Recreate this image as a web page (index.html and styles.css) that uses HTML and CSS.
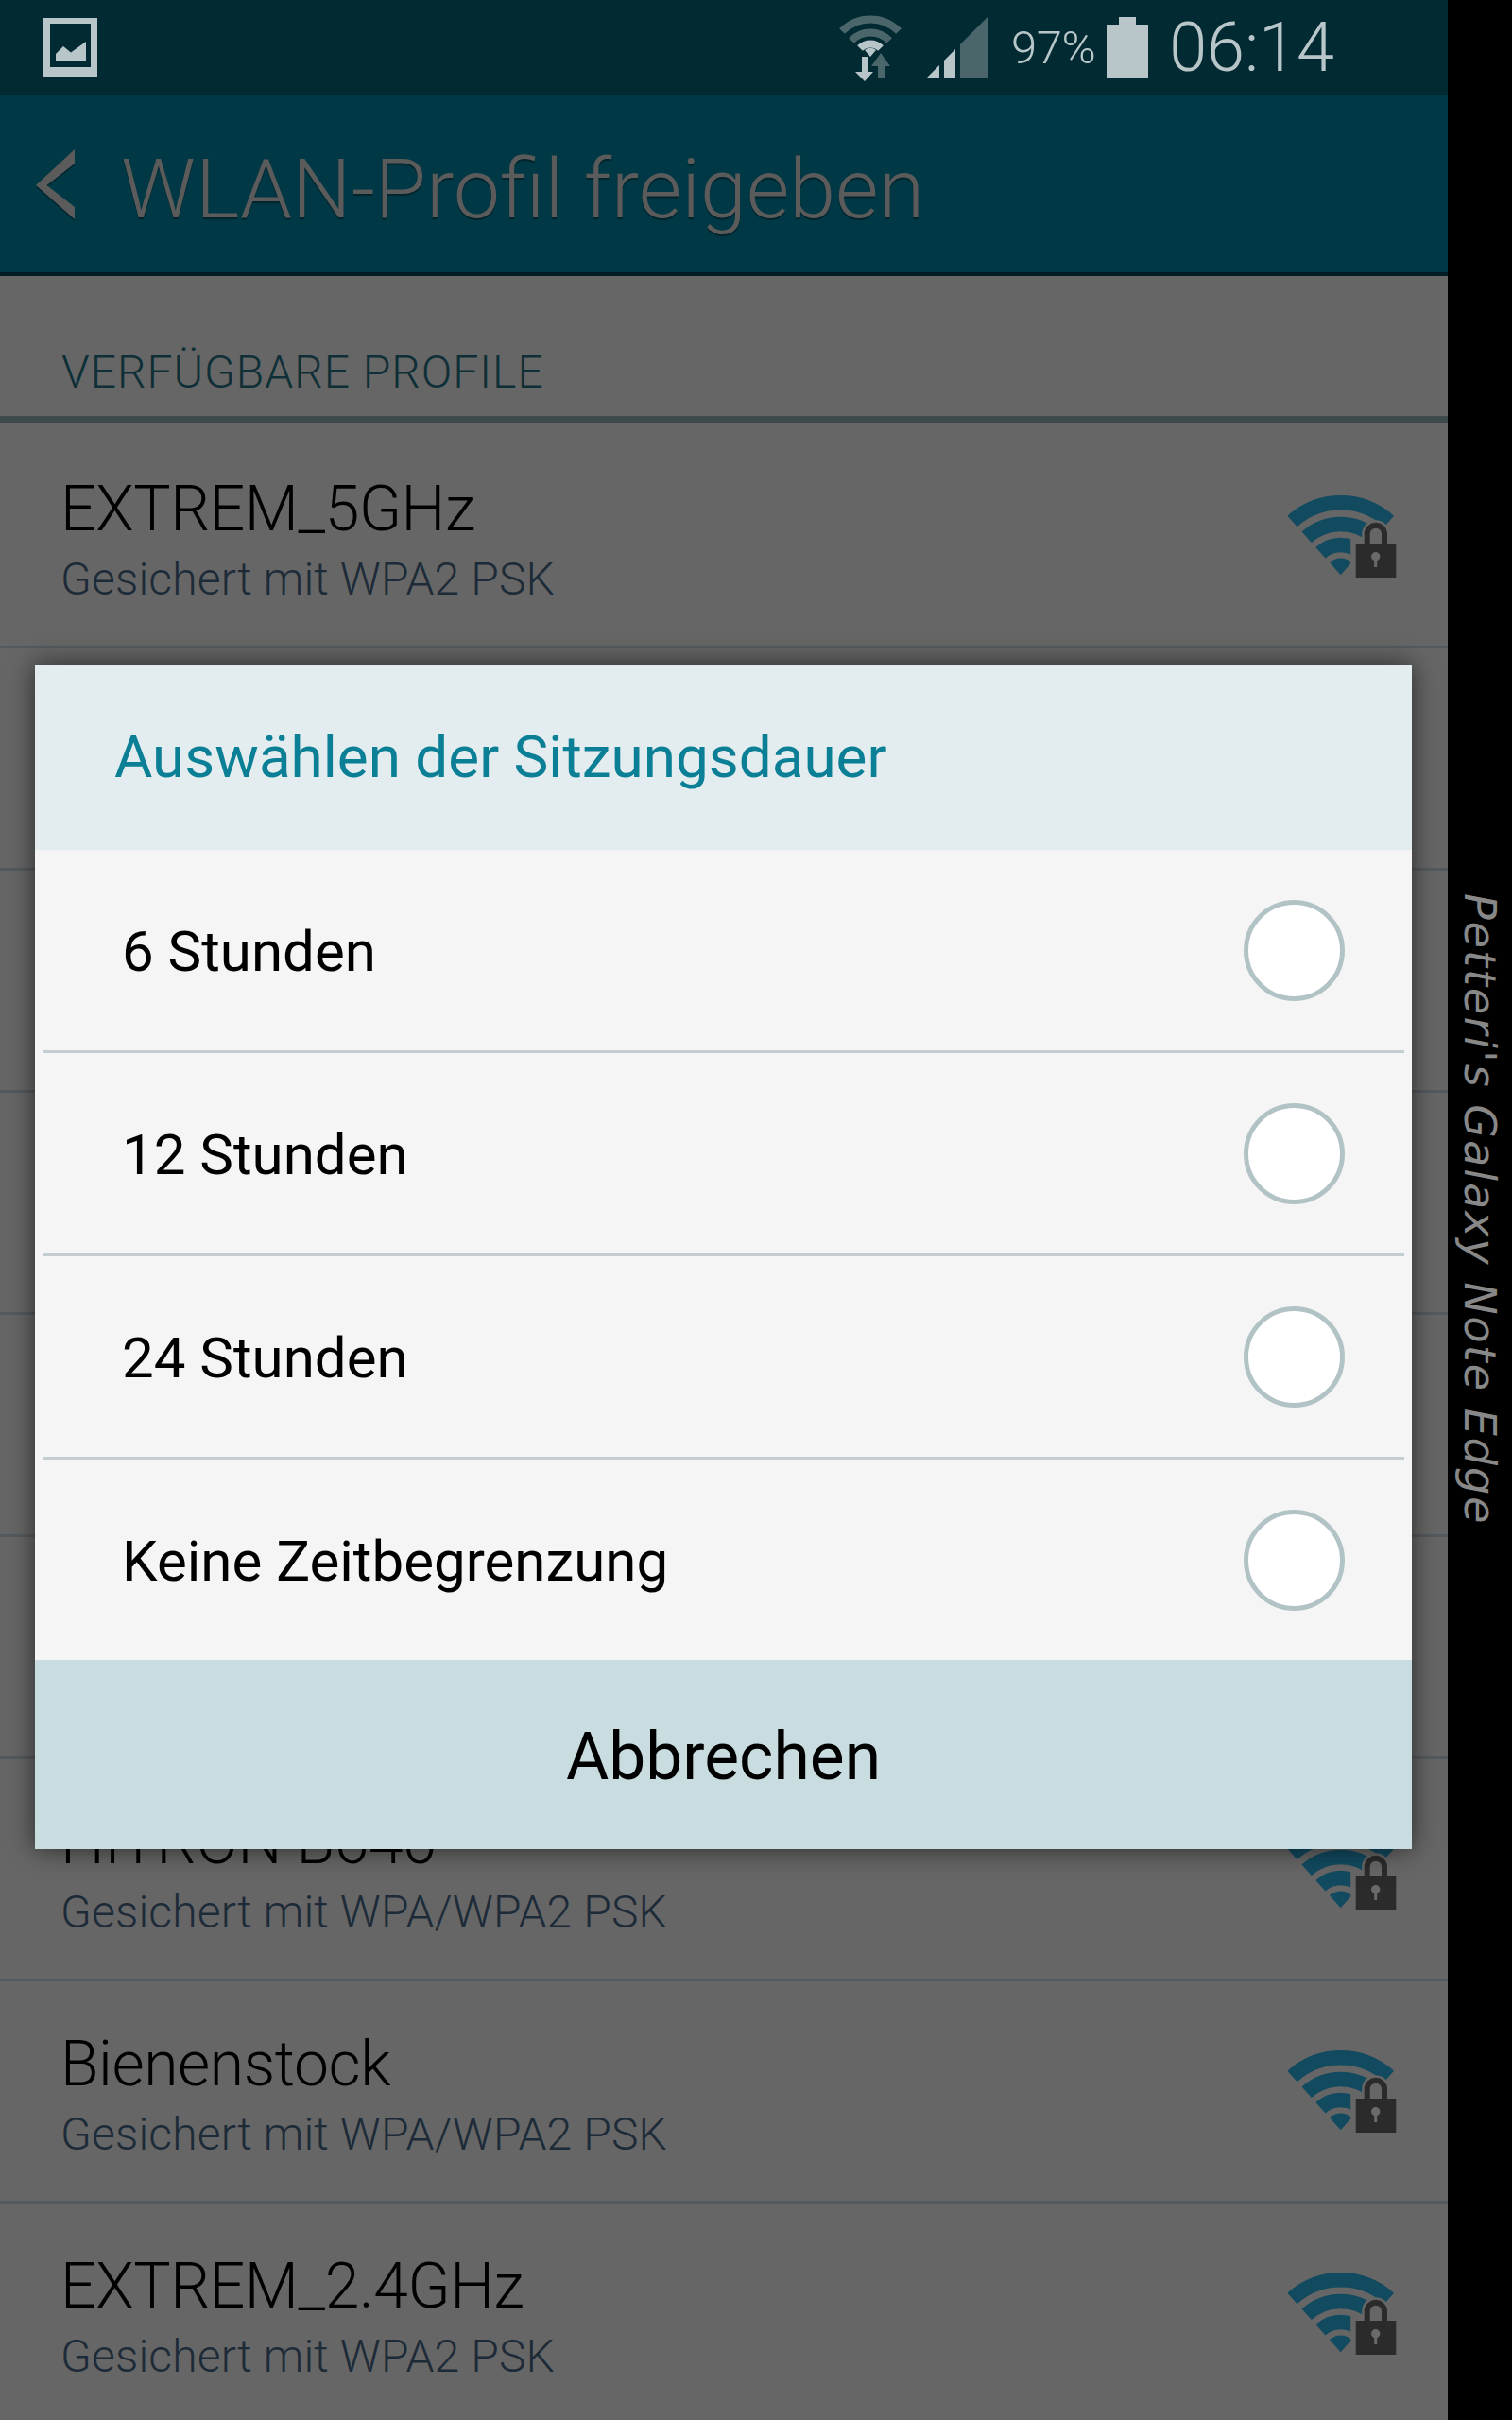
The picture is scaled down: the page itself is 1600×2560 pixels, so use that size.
FILE: index.html
```html
<!DOCTYPE html>
<html lang="de">
  <head>
    <meta charset="utf-8">
    <title>WLAN-Profil freigeben</title>
    <link rel="stylesheet" href="styles.css">
  </head>
  <body>
    <svg class="defs" width="0" height="0">
      <symbol id="wifi-lock" viewBox="0 0 116 90">
        <g class="fan">
          <path d="M4.5 27.4A76.6 76.6 0 0 1 106.9 27.4"/>
          <path d="M19.7 44.3A53.8 53.8 0 0 1 91.7 44.3"/>
          <path d="M34.4 60.7A31.8 31.8 0 0 1 77 60.7"/>
        </g>
        <path class="fan-tip" d="M55.7 84.3L43.9 71.1A17.7 17.7 0 0 1 67.5 71.1Z"/>
        <path class="halo" d="M71.7 51H114.3V87H71.7ZM83.7 51V40A9.2 9.2 0 0 1 102 40V51"/>
        <path class="shackle" d="M83.7 51V40A9.2 9.2 0 0 1 102 40V51"/>
        <rect class="body" x="71.7" y="51" width="42.6" height="36"/>
        <circle class="hole" cx="92.7" cy="64.7" r="4.7"/>
        <rect class="hole" x="91.2" y="66" width="3" height="10"/>
      </symbol>
    </svg>

    <div id="phone">
      <div id="screen">
        <!-- status bar -->
        <div class="status">
          <svg class="st-pic" width="57" height="62" viewBox="0 0 57 62">
            <path class="st-fill" fill-rule="evenodd" d="M0 0H57V62H0ZM7 6V52H50V6Z"/>
            <path class="st-fill" d="M13 45V38L21 30L29 36.500L45 25V45Z"/>
          </svg>
          <div class="status-right">
            <svg class="st-wifi" width="66" height="71" viewBox="0 0 66 71">
              <g class="arc-dim">
                <path d="M3 18A42 42 0 0 1 63 18"/>
                <path d="M13 28A28 28 0 0 1 53 28"/>
              </g>
              <g class="arc-on">
                <path d="M22 36A15.500 15.500 0 0 1 44 36"/>
              </g>
              <path class="st-fill" d="M33 45L27 38A9 9 0 0 1 39 38Z"/>
              <path class="st-fill" d="M24 45H30V61H36L27 71L17 61H24Z"/>
              <path class="st-dim" d="M44 41L54 55H48V67H41V55H34Z"/>
            </svg>
            <svg class="st-signal" width="64" height="64" viewBox="0 0 64 64">
              <path class="st-fill" d="M0 64L13 51V64Z"/>
              <path class="st-fill" d="M18 64V46L30 34V64Z"/>
              <path class="st-dim" d="M35 64V29L64 0V64Z"/>
            </svg>
            <span class="st-pct">97%</span>
            <svg class="st-batt" width="44" height="64" viewBox="0 0 44 64">
              <path class="st-fill" d="M13 0H31V8H44V64H0V8H13Z"/>
            </svg>
            <span class="st-time">06:14</span>
          </div>
        </div>

        <!-- action bar -->
        <div class="actionbar">
          <svg class="back" width="41" height="76" viewBox="0 0 41 76">
            <path d="M41 0V15L11.500 38L41 61V74L0 38Z"/>
          </svg>
          <span class="actionbar-title">WLAN-Profil freigeben</span>
        </div>

        <div class="section">VERFÜGBARE PROFILE</div>

        <div class="list">
          <div class="row">
            <div class="row-text">
              <div class="name">EXTREM_5GHz</div>
              <div class="sub">Gesichert mit WPA2 PSK</div>
            </div>
            <svg class="wifi"><use href="#wifi-lock"/></svg>
          </div>
          <div class="row"></div>
          <div class="row"></div>
          <div class="row"></div>
          <div class="row"></div>
          <div class="row"></div>
          <div class="row">
            <div class="row-text">
              <div class="name">HITRON B640</div>
              <div class="sub">Gesichert mit WPA/WPA2 PSK</div>
            </div>
            <svg class="wifi"><use href="#wifi-lock"/></svg>
          </div>
          <div class="row">
            <div class="row-text">
              <div class="name">Bienenstock</div>
              <div class="sub">Gesichert mit WPA/WPA2 PSK</div>
            </div>
            <svg class="wifi"><use href="#wifi-lock"/></svg>
          </div>
          <div class="row row-last">
            <div class="row-text">
              <div class="name">EXTREM_2.4GHz</div>
              <div class="sub">Gesichert mit WPA2 PSK</div>
            </div>
            <svg class="wifi"><use href="#wifi-lock"/></svg>
          </div>
        </div>

        <!-- session dialog -->
        <div class="dialog">
          <div class="dialog-title">Auswählen der Sitzungsdauer</div>
          <div class="option"><span>6 Stunden</span><span class="radio"></span></div>
          <div class="option"><span>12 Stunden</span><span class="radio"></span></div>
          <div class="option"><span>24 Stunden</span><span class="radio"></span></div>
          <div class="option option-last"><span>Keine Zeitbegrenzung</span><span class="radio"></span></div>
          <div class="dialog-cancel">Abbrechen</div>
        </div>
      </div>

      <div id="edge">
        <span class="edge-text">Petteri's Galaxy Note Edge</span>
      </div>
    </div>
  </body>
</html>
```

FILE: styles.css
```css
html, body{
  margin:0;
  padding:0;
  background:#000;
}
body{
  font-family:"Roboto", "Liberation Sans", sans-serif;
}
.defs{
  position:absolute;
}
#phone{
  display:flex;
  width:1600px;
  height:2560px;
  overflow:hidden;
}
#screen{
  position:relative;
  width:1532px;
  height:2560px;
  background:#666;
  overflow:hidden;
}
#edge{
  width:68px;
  background:#000;
  padding-top:945px;
  box-sizing:border-box;
}
.edge-text{
  display:block;
  writing-mode:vertical-rl;
  font-family:"DejaVu Sans", sans-serif;
  font-style:oblique;
  font-size:46px;
  letter-spacing:2px;
  line-height:68px;
  color:#888;
  white-space:nowrap;
}

/* status bar */
.status{
  display:flex;
  justify-content:space-between;
  align-items:center;
  height:100px;
  padding:0 120px 0 46px;
  box-sizing:border-box;
  background:#012a32;
}
.status-right{
  display:flex;
  align-items:center;
}
.st-fill{fill:#b9c6c9;}
.st-dim{fill:#4b666b;}
.arc-dim path, .arc-on path{
  fill:none;
  stroke-width:8;
}
.arc-dim path{stroke:#4b666b;}
.arc-on path{stroke:#b9c6c9;}
.st-signal{margin-left:27px;}
.st-pct{
  margin-left:25px;
  font-size:49px;
  font-weight:300;
  color:#b9c6c9;
  letter-spacing:-0.5px;
}
.st-batt{margin-left:12px;}
.st-time{
  margin-left:22px;
  font-size:72px;
  font-weight:300;
  color:#b9c6c9;
}

/* action bar */
.actionbar{
  display:flex;
  align-items:center;
  height:188px;
  padding-left:38px;
  background:#003945;
  border-bottom:4px solid #021c26;
}
.back{
  margin-top:4px;
  fill:#5b5b5b;
  filter:drop-shadow(0 2px 0 #01242d);
}
.actionbar-title{
  margin:10px 0 0 49px;
  font-size:88px;
  font-weight:300;
  color:#5b5b5b;
  text-shadow:0 2px 1px #01242d;
}

/* list */
.section{
  height:73px;
  padding:75px 0 0 65px;
  font-size:48px;
  font-weight:300;
  letter-spacing:1px;
  line-height:54px;
  color:#0f2f37;
  border-bottom:8px solid #3f4a4c;
}
.list{
  padding-top:3px;
}
.row{
  display:flex;
  justify-content:space-between;
  align-items:center;
  height:235px;
  padding:0 53px 0 64px;
  box-sizing:border-box;
  border-bottom:3px solid #555a5e;
}
.row-last{
  border-bottom-color:transparent;
}
.row-text{
  padding-top:8px;
}
.name{
  font-size:66px;
  letter-spacing:-0.4px;
  line-height:78px;
  font-weight:300;
  color:#000;
}
.sub{
  margin-top:6px;
  font-size:48px;
  letter-spacing:0.15px;
  line-height:58px;
  font-weight:300;
  color:#1d2b38;
}
.wifi{
  width:116px;
  height:90px;
  margin-top:3px;
}
.fan path{
  fill:none;
  stroke:#124a60;
  stroke-width:15.400;
}
.fan-tip{fill:#124a60;}
.halo{
  fill:#666;
  stroke:#666;
  stroke-width:11;
}
.shackle{
  fill:none;
  stroke:#2b2b2b;
  stroke-width:6;
}
.body{fill:#2b2b2b;}
.hole{fill:#6a6a6a;}

/* dialog */
.dialog{
  position:absolute;
  left:37px;
  top:703px;
  width:1457px;
  box-shadow:0 0 26px rgba(0,0,0,.6);
  background:#f5f5f5;
}
.dialog-title{
  height:196px;
  line-height:196px;
  padding-left:84px;
  background:#e3ecee;
  font-size:62px;
  color:#0a7f95;
}
.option{
  display:flex;
  justify-content:space-between;
  align-items:center;
  height:215px;
  margin:0 8px;
  padding:0 63px 0 84px;
  box-sizing:border-box;
  border-bottom:3px solid #c3cdd2;
  font-size:60px;
  color:#000;
}
.option span:first-child{
  padding-top:3px;
}
.option-last{
  height:212px;
  border-bottom:0;
}
.radio{
  width:107px;
  height:107px;
  box-sizing:border-box;
  border:5px solid #b2c3c6;
  border-radius:50%;
  background:#fff;
}
.dialog-cancel{
  height:200px;
  padding-top:3px;
  box-sizing:border-box;
  line-height:200px;
  text-align:center;
  background:#c9dce0;
  font-size:69.500px;
  color:#000;
}
```
